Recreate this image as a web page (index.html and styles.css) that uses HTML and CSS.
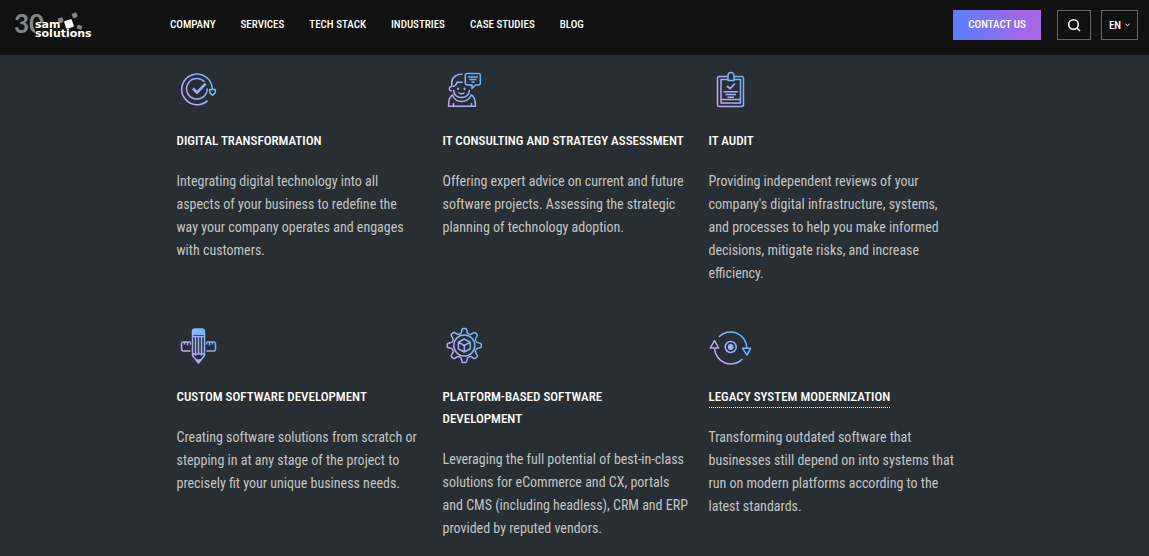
FILE: index.html
```
<!DOCTYPE html>
<html lang="en">
<head>
  <meta charset="UTF-8">
  <meta name="viewport" content="width=device-width, initial-scale=1.0">
  <title>SaM Solutions</title>
  <link rel="stylesheet" href="styles.css">
</head>
<body>

  <!-- Header -->
  <header class="header">
    <a class="logo" href="#" aria-label="SaM Solutions">
      <svg width="82" height="32" viewBox="0 0 82 32">
        <text class="logo-years" x="0" y="23">30</text>
        <path fill="#111" d="M21 13h23v7h38v11H21z"/>
        <g fill="#858585">
          <rect x="44" y="8" width="5" height="5" rx="1" transform="rotate(-20 46 10)"/>
          <rect x="58" y="3" width="5" height="5" rx="1" transform="rotate(-20 60 5)"/>
          <rect x="63" y="15" width="5" height="4" rx="1" transform="rotate(20 65 17)"/>
        </g>
        <rect x="51" y="10" width="8" height="8" rx="1" fill="#fff" transform="rotate(-18 55 14)"/>
        <text class="logo-name" x="21" y="18">sam</text>
        <text class="logo-name" x="21" y="27">solutions</text>
      </svg>
    </a>

    <nav class="menu">
      <a href="#">COMPANY</a>
      <a href="#">SERVICES</a>
      <a href="#">TECH STACK</a>
      <a href="#">INDUSTRIES</a>
      <a href="#">CASE STUDIES</a>
      <a href="#">BLOG</a>
    </nav>

    <div class="actions">
      <a class="contact" href="#">CONTACT US</a>
      <button class="box-button search" aria-label="Search">
        <svg width="14" height="14" viewBox="0 0 14 14" fill="none" stroke="#fff" stroke-width="1.5">
          <circle cx="6.5" cy="6.5" r="4.8"/>
          <path d="M10 10l3 3"/>
        </svg>
      </button>
      <button class="box-button lang">EN
        <svg width="5" height="4" viewBox="0 0 5 4" fill="none" stroke="#fff">
          <path d="M.5 1l2 1.6 2-1.6"/>
        </svg>
      </button>
    </div>
  </header>

  <!-- Services -->
  <main class="services">
    <article class="service">
      <svg class="icon" viewBox="0 0 42 42">
        <defs>
          <linearGradient id="line" gradientUnits="userSpaceOnUse" x1="4" y1="34" x2="38" y2="12">
            <stop offset="0" stop-color="#cfa0f2"/>
            <stop offset=".5" stop-color="#9db2fb"/>
            <stop offset="1" stop-color="#5eb4f2"/>
          </linearGradient>
        </defs>
        <path d="M35.3 21A15.3 15.3 0 1 0 30.5 32.6"/>
        <path d="M27.5 13.8A10.3 10.3 0 1 0 30.2 20.5"/>
        <path class="thick" d="M16 20.5l4 4.2 8.6-9"/>
        <path d="M32.6 21.4h5.8v2.2c0 1.6-1.4 2.6-2.9 3.7-1.5-1.1-2.9-2.1-2.9-3.7z"/>
      </svg>
      <h3>DIGITAL TRANSFORMATION</h3>
      <p>Integrating digital technology into all aspects of your business to redefine the<br>way your company operates and engages<br>with customers.</p>
    </article>

    <article class="service">
      <svg class="icon" viewBox="0 0 42 42">
        <path d="M8.8 19v-4.5C8.8 9.5 13 6 19.5 6"/>
        <path d="M10 18.5c2-.5 3.5-2 4-4.2h5.5"/>
        <path d="M8.8 18.5c-3-.5-3.6 4.5 0 4.6"/>
        <path d="M10.5 22c.5 5 3.5 7.5 8 7.5s7.5-2.5 8-7.5"/>
        <path d="M10.5 26.5c-3 1-5 4.5-5 11.7h27c0-6.7-2-10.5-5-11.7"/>
        <path d="M9.5 27.5c2 4 5 6 9 6s7.5-2 9.5-6M10.5 35v3"/>
        <path d="M28.5 35v3M15.5 24.5c1 1.8 5 1.8 6 0"/>
        <path class="dots" d="M15 20.5v.5M21.5 20.5v.5"/>
        <path d="M24 5.500h11.5c1 0 1.8.8 1.8 1.8v8c0 1-.8 1.7-1.8 1.7h-3L29 20.5V17h-5c-1 0-1.7-.7-1.7-1.7v-8c0-1 .7-1.8 1.7-1.8z"/>
        <path d="M25 9h10M26.5 11.5h7M28.5 14h3"/>
      </svg>
      <h3>IT CONSULTING AND STRATEGY ASSESSMENT</h3>
      <p>Offering expert advice on current and future software projects. Assessing the strategic planning of technology adoption.</p>
    </article>

    <article class="service">
      <svg class="icon" viewBox="0 0 42 42">
        <path d="M19 8.5h-8.5a2 2 0 0 0-2 2v26a2 2 0 0 0 2 2h22a2 2 0 0 0 2-2v-26a2 2 0 0 0-2-2H25"/>
        <path d="M19 11.5h-7V35h19.5V11.5H25"/>
        <path d="M19 12.5v-5a3 3 0 0 1 6 0v5z"/>
        <path d="M12 31.5h19.5"/>
        <path class="medium" d="M18 18l3 2.7 5-5.2"/>
        <path d="M14.5 23.8H29M16.5 26.5H27M18.5 29.2H25"/>
      </svg>
      <h3>IT AUDIT</h3>
      <p>Providing independent reviews of your company's digital infrastructure, systems, and processes to help you make informed decisions, mitigate risks, and increase efficiency.</p>
    </article>

    <article class="service">
      <svg class="icon" viewBox="0 0 42 42">
        <path class="filled" d="M15.5 10V7.5A2.5 2.5 0 0 1 18 5h7a2.5 2.5 0 0 1 2.5 2.5V10z"/>
        <path d="M15.5 10v21.5l6 7.5 6-7.5V10zM15.5 12.5h12"/>
        <path d="M18.5 13v17M21.5 13v17M24.5 13v17"/>
        <path d="M15.5 31c1-1.8 2.5-1.8 3.2 0 1-1.8 4.6-1.8 5.6 0 .7-1.8 2.2-1.8 3.2 0"/>
        <path class="filled" d="M19.5 36h4l-2 2.5z"/>
        <path d="M13.5 18h-7a2 2 0 0 0-2 2v5a2 2 0 0 0 2 2h7M7.5 18.5v2M10.5 18.5v3M13.5 18.5v2"/>
        <path d="M29.5 18h7a2 2 0 0 1 2 2v5a2 2 0 0 1-2 2h-7M29.5 18.5v2M32.5 18.5v3M35.5 18.5v2"/>
      </svg>
      <h3>CUSTOM SOFTWARE DEVELOPMENT</h3>
      <p>Creating software solutions from scratch or stepping in at any stage of the project to precisely fit your unique business needs.</p>
    </article>

    <article class="service">
      <svg class="icon" viewBox="0 0 42 42">
        <defs>
          <path id="tooth" d="M-4.9-11.9C-4-11.2-2.8-12.5-2.6-14.8-2.4-16.7-1.7-17-.8-17H.8C1.7-17 2.4-16.7 2.6-14.8 2.8-12.5 4-11.2 4.9-11.9"/>
          <mask id="gear" maskUnits="userSpaceOnUse" x="0" y="0" width="42" height="42">
            <g stroke="#fff" transform="translate(21.3 21.5)">
              <use href="#tooth"/>
              <use href="#tooth" transform="rotate(45)"/>
              <use href="#tooth" transform="rotate(90)"/>
              <use href="#tooth" transform="rotate(135)"/>
              <use href="#tooth" transform="rotate(180)"/>
              <use href="#tooth" transform="rotate(225)"/>
              <use href="#tooth" transform="rotate(270)"/>
              <use href="#tooth" transform="rotate(315)"/>
            </g>
          </mask>
        </defs>
        <rect class="filled" width="42" height="42" stroke="none" mask="url(#gear)"/>
        <circle cx="21.3" cy="21.5" r="10.5"/>
        <path d="M21.3 15l5.900 3.2v6.6l-5.9 3.2-5.9-3.2v-6.6zM15.4 18.2l5.9 3.3 5.9-3.3M21.3 21.5V28"/>
      </svg>
      <h3>PLATFORM-BASED SOFTWARE<br>DEVELOPMENT</h3>
      <p>Leveraging the full potential of best-in-class solutions for eCommerce and CX, portals and CMS (including headless), CRM and ERP provided by reputed vendors.</p>
    </article>

    <article class="service">
      <svg class="icon" viewBox="0 0 42 42">
        <path d="M10 12.8A16.2 16.2 0 0 1 37.8 24M5.6 24.5A16.2 16.2 0 0 0 33.5 35"/>
        <path d="M33.6 24.3h8L38 31.2zM1.3 24h8.3L5.5 16.5z"/>
        <circle cx="21.7" cy="23" r="5.5"/>
        <circle class="filled" cx="21.7" cy="23" r="2.2"/>
      </svg>
      <h3><a href="#">LEGACY SYSTEM MODERNIZATION</a></h3>
      <p>Transforming outdated software that businesses still depend on into systems that run on modern platforms according to the latest standards.</p>
    </article>
  </main>

</body>
</html>
```
FILE: styles.css
```
* {
  box-sizing: border-box;
}

body {
  margin: 0;
  background: #282f34;
  color: #c2c4c5;
  font-family: "Roboto Condensed", "Liberation Sans Narrow", "Liberation Sans", sans-serif;
}

a {
  color: inherit;
  text-decoration: none;
}

/* Header */
.header {
  display: flex;
  align-items: flex-start;
  height: 55px;
  padding: 10px 11px 0 14px;
  background: #111;
  color: #fff;
  font-size: 11px;
  font-weight: 500;
}

.logo {
  width: 156px;
}

.logo svg {
  display: block;
}

.logo-years {
  font: bold 26px Lato, sans-serif;
  fill: #858585;
}

.logo-name {
  font: bold 11px "DejaVu Sans", sans-serif;
  fill: #fff;
}

.menu {
  display: flex;
  gap: 25px;
  line-height: 29px;
}

.actions {
  display: flex;
  margin-left: auto;
}

.contact {
  width: 88px;
  margin-right: 16px;
  background: linear-gradient(75deg, #567fff, #a566e6 80%);
  line-height: 30px;
  text-align: center;
}

.box-button {
  display: flex;
  align-items: center;
  justify-content: center;
  height: 30px;
  padding: 0;
  border: 1px solid #666;
  background: none;
  color: #fff;
  font: inherit;
}

.search {
  width: 34px;
  margin-right: 10px;
}

.lang {
  gap: 4px;
  width: 37px;
}

/* Services */
.services {
  display: grid;
  grid-template-columns: repeat(3, 1fr);
  gap: 39px 2px;
  max-width: 796px;
  margin: 0 auto;
  padding: 13px 0 16px;
}

.service {
  padding-right: 18px;
}

.icon {
  display: block;
  width: 42px;
  height: 42px;
  overflow: visible;
  fill: none;
  stroke: url(#line);
  stroke-width: 1.5;
  stroke-linejoin: round;
}

.icon .thick {
  stroke-width: 2.6;
}

.icon .medium {
  stroke-width: 1.8;
}

.icon .dots {
  stroke-width: 2;
  stroke-linecap: round;
}

.icon .filled {
  fill: url(#line);
}

.service h3 {
  margin: 20px 0 18px;
  color: #fff;
  font-size: 13px;
  font-weight: 500;
  line-height: 22px;
}

.service h3 a {
  padding-bottom: 3px;
  border-bottom: 1px dotted #fff;
}

.service p {
  margin: 0;
  font-size: 14px;
  line-height: 23px;
}
```
